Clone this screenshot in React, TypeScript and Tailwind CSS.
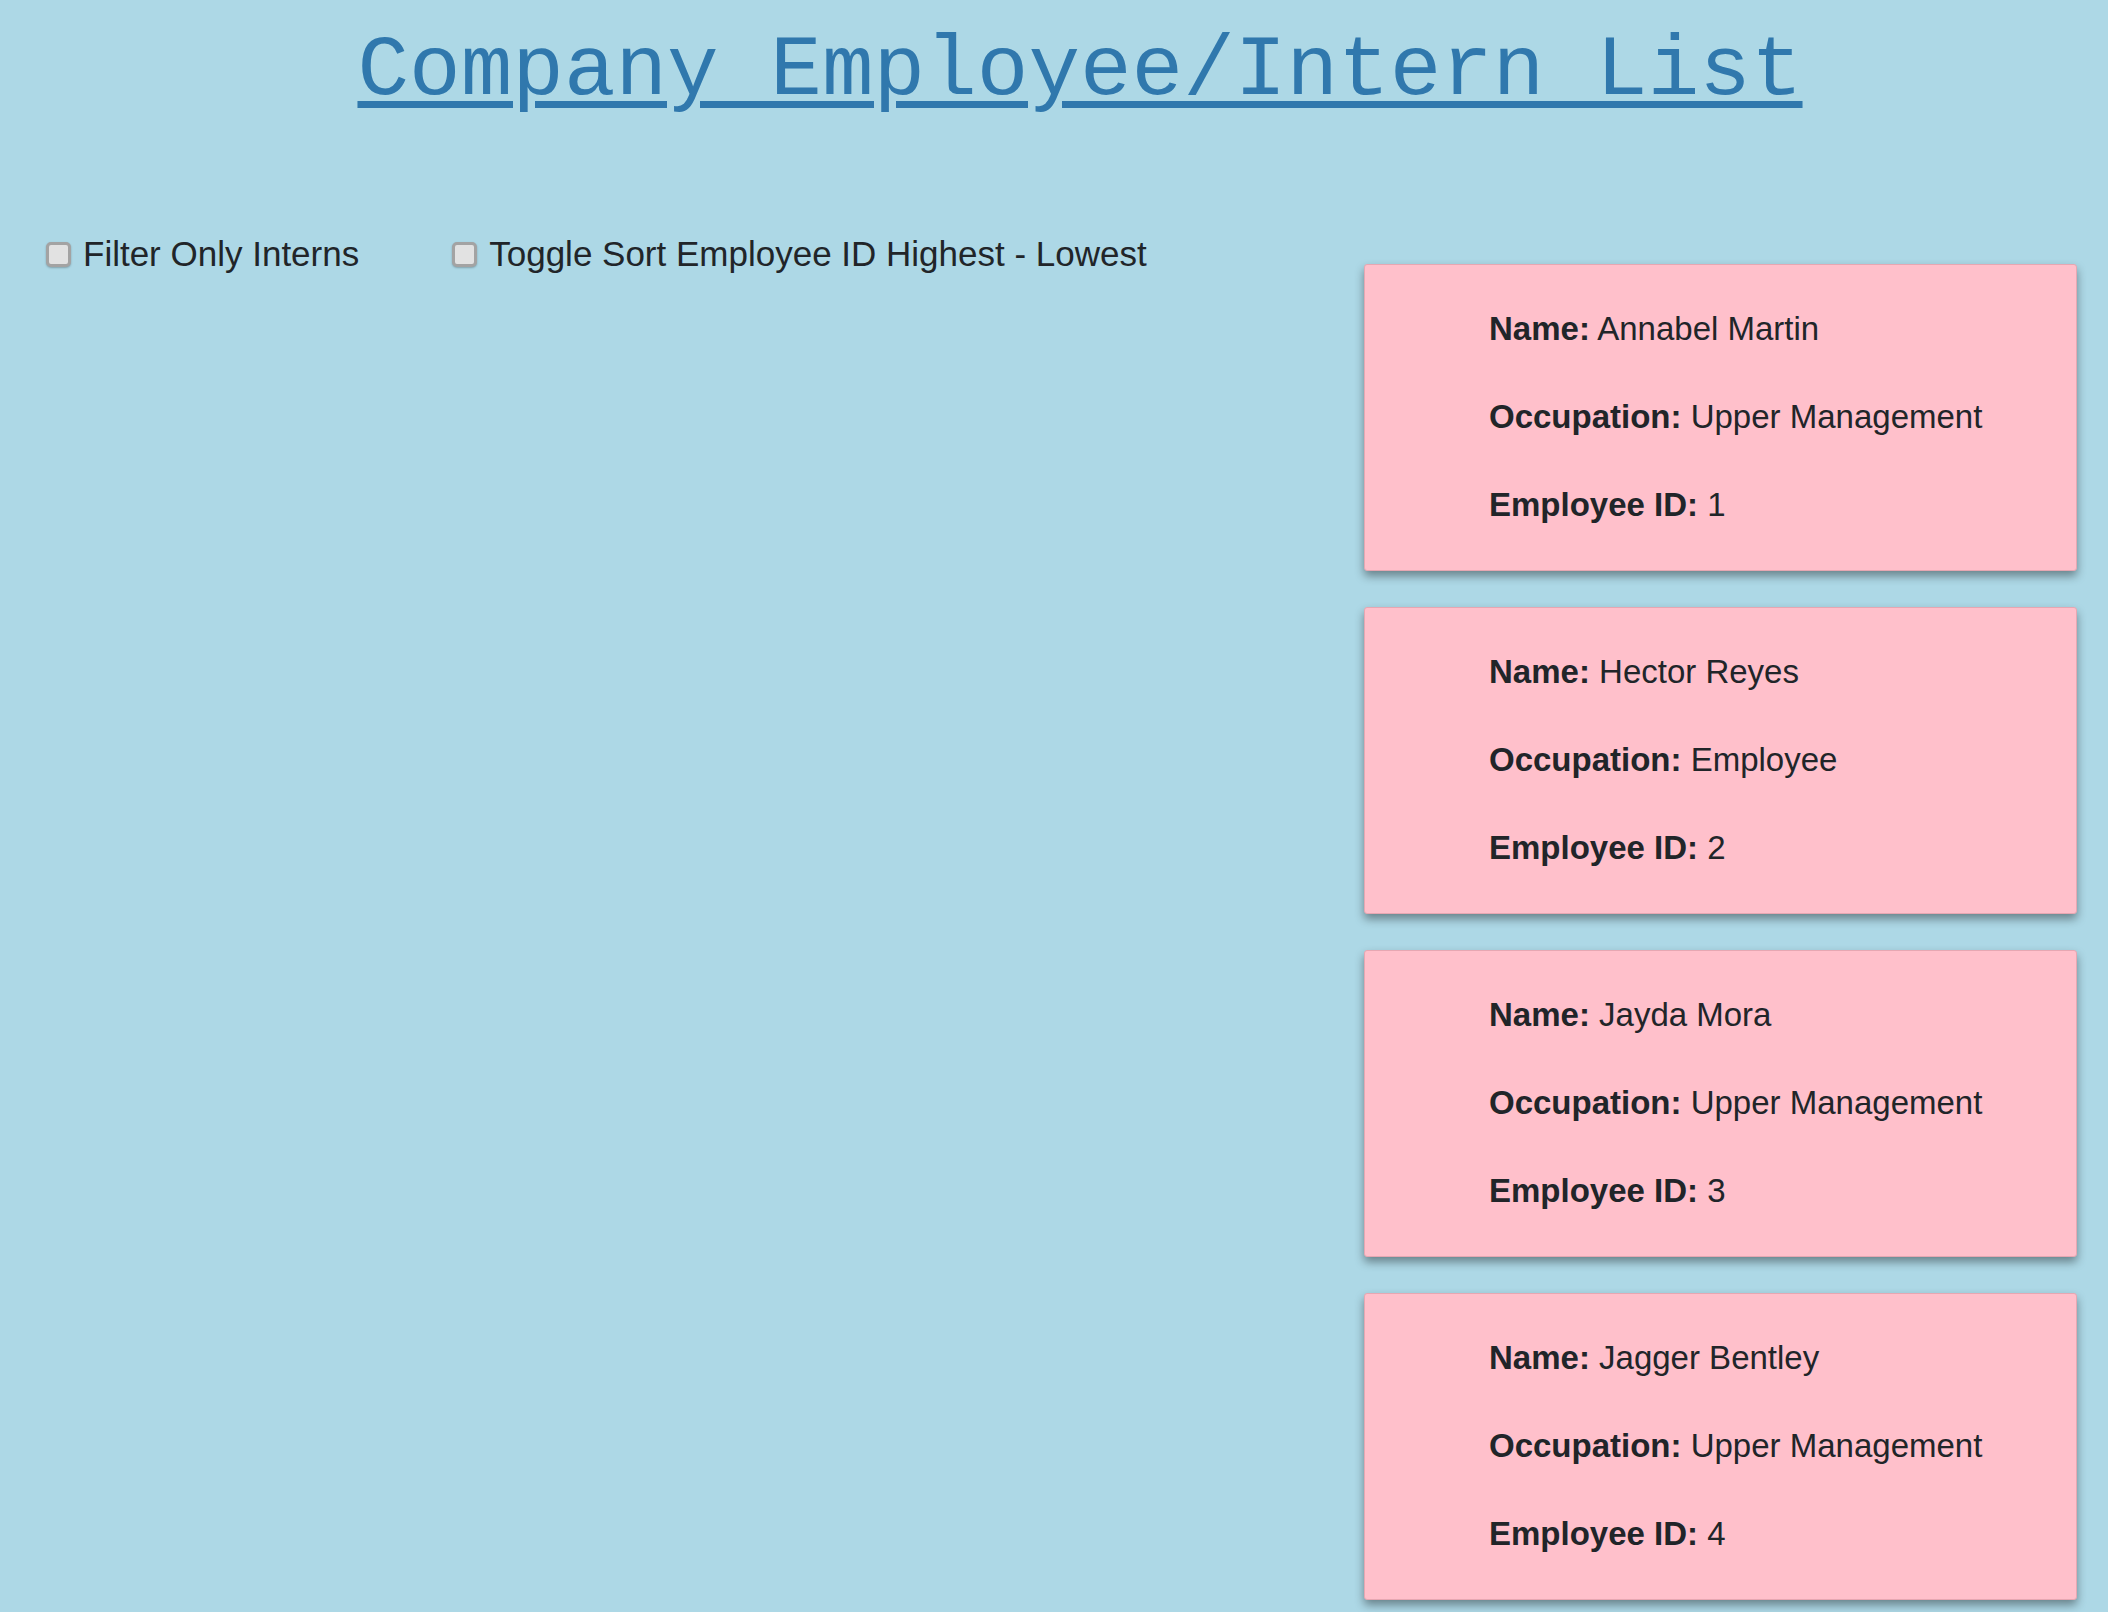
import { useState } from 'react';

type Person = {
  name: string;
  occupation: string;
  id: number;
  intern: boolean;
};

const people: Person[] = [
  { name: 'Annabel Martin', occupation: 'Upper Management', id: 1, intern: false },
  { name: 'Hector Reyes', occupation: 'Employee', id: 2, intern: false },
  { name: 'Jayda Mora', occupation: 'Upper Management', id: 3, intern: false },
  { name: 'Jagger Bentley', occupation: 'Upper Management', id: 4, intern: false },
];

const Check = ({ label, checked, onChange }: { label: string; checked: boolean; onChange: () => void }) => (
  <label className="flex items-center gap-[12px] cursor-pointer">
    <input
      type="checkbox"
      checked={checked}
      onChange={onChange}
      className="appearance-none w-[25px] h-[25px] rounded-[5px] border-[3px] border-[#a3a3a3] bg-[#e2e2e2] shadow-[0_1px_2px_rgba(0,0,0,0.25)] checked:bg-[#3078ad]"
    />
    <span>{label}</span>
  </label>
);

const Card = ({ person }: { person: Person }) => (
  <div className="bg-[#ffc0cb] border border-[#e6a7b2] rounded-[3px] shadow-[0_5px_10px_rgba(0,0,0,0.4)] pl-[124px] pt-[44px] pb-[45px] flex flex-col gap-[48px] text-[33px] leading-[40px] text-[#212529]">
    <p>
      <b>Name:</b> {person.name}
    </p>
    <p>
      <b>Occupation:</b> {person.occupation}
    </p>
    <p>
      <b>Employee ID:</b> {person.id}
    </p>
  </div>
);

const App = () => {
  const [internsOnly, setInternsOnly] = useState(false);
  const [sortDesc, setSortDesc] = useState(false);

  let list = internsOnly ? people.filter((p) => p.intern) : [...people];
  list.sort((a, b) => (sortDesc ? b.id - a.id : a.id - b.id));

  return (
    <div className="min-h-screen bg-[#add8e6] font-['Liberation_Sans',Arial,sans-serif] text-[#212529]">
      <h1 className="pt-[21px] pl-[52px] text-center font-['Liberation_Mono','Courier_New',monospace] text-[86px] leading-[100px] text-[#3078ad] underline decoration-[length:7px] underline-offset-[7px]">
        Company Employee/Intern List
      </h1>

      <div className="flex items-start mt-[113px] pr-[31px]">
        <div className="flex-1 flex gap-[93px] pl-[46px] text-[35px] leading-[40px]">
          <Check label="Filter Only Interns" checked={internsOnly} onChange={() => setInternsOnly(!internsOnly)} />
          <Check label="Toggle Sort Employee ID Highest - Lowest" checked={sortDesc} onChange={() => setSortDesc(!sortDesc)} />
        </div>

        {/* employee cards */}
        <div className="w-[713px] mt-[30px] flex flex-col gap-[36px]">
          {list.map((p) => (
            <Card key={p.id} person={p} />
          ))}
        </div>
      </div>
    </div>
  );
};

export default App;
